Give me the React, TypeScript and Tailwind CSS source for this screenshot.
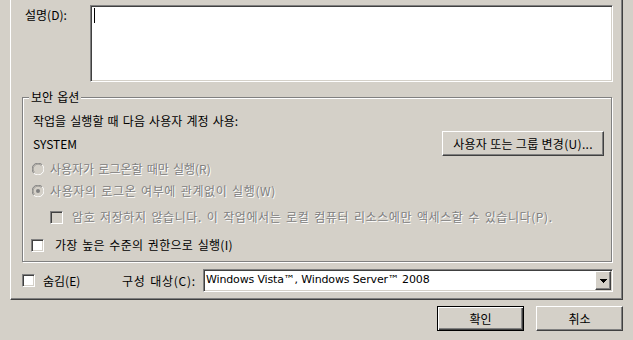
import React from 'react';

const sunken =
  'border border-t-[#808080] border-l-[#808080] border-b-white border-r-white shadow-[inset_1px_1px_0_#404040,inset_-1px_-1px_0_#d4d0c8]';
const raised =
  'border border-t-white border-l-white border-b-[#404040] border-r-[#404040] shadow-[inset_-1px_-1px_0_#808080]';
const dim = 'text-[#808080] [text-shadow:1px_1px_0_#fff]';

const CheckBox = ({ disabled }: { disabled?: boolean }) => (
  <div className={`w-[13px] h-[13px] shrink-0 ${sunken} ${disabled ? 'bg-[#d4d0c8]' : 'bg-white'}`} />
);

const Radio = ({ checked }: { checked?: boolean }) => (
  <svg width="12" height="12" viewBox="0 0 12 12" className="shrink-0">
    <circle cx="6" cy="6" r="5.5" fill="#d4d0c8" />
    <path d="M1.8 10.2 A5.5 5.5 0 0 1 10.2 1.8" fill="none" stroke="#808080" strokeWidth="1" />
    <path d="M2.6 9.4 A4.5 4.5 0 0 1 9.4 2.6" fill="none" stroke="#404040" strokeWidth="1" opacity="0.35" />
    <path d="M10.2 1.8 A5.5 5.5 0 0 1 1.8 10.2" fill="none" stroke="#ffffff" strokeWidth="1" />
    {checked && <circle cx="6" cy="6" r="2" fill="#808080" />}
  </svg>
);

const Option = ({ children, gap, indent, disabled, box, tracking = 0 }: any) => (
  <div className="h-[16px] flex items-center" style={{ paddingLeft: indent }}>
    {box}
    <span
      className={`leading-[16px] whitespace-nowrap ${disabled ? dim : 'text-black'}`}
      style={{ marginLeft: gap, letterSpacing: tracking }}
    >
      {children}
    </span>
  </div>
);

export default function App() {
  return (
    <div className="w-[633px] h-[340px] overflow-hidden bg-[#d4d0c8] text-[12px] text-black font-['Noto_Sans_CJK_KR','Noto_Sans',sans-serif] [word-spacing:1.5px] flex flex-col">
      {/* tab page */}
      <div className="ml-[10px] w-[613px] h-[300px] shrink-0 flex flex-col border-l border-l-white border-r border-r-[#404040] border-b border-b-[#404040] shadow-[inset_-1px_-1px_0_#808080]">
        <div className="flex mt-[5px] pl-[14px]">
          <span className="w-[65px] mt-[2px] leading-[16px]">설명(D):</span>
          <div className={`w-[523px] h-[77px] bg-white ${sunken}`}>
            <div className="ml-[3px] mt-[2px] w-px h-[15px] bg-black" />
          </div>
        </div>

        {/* security group */}
        <div className="relative ml-[11px] mt-[15px] w-[590px] h-[165px] border border-[#808080] shadow-[inset_1px_1px_0_#fff,1px_1px_0_#fff]">
          <span className="absolute left-[6px] -top-[9px] px-[2px] bg-[#d4d0c8] leading-[16px]">보안 옵션</span>
          <div className="flex flex-col pl-[8px] pr-[7px] pt-[15px]">
            <div className="h-[16px] leading-[16px] pl-[2px]">작업을 실행할 때 다음 사용자 계정 사용:</div>
            <div className="mt-[2px] h-[25px] flex items-center justify-between">
              <span className="pl-[2px] leading-[16px]">SYSTEM</span>
              <button className={`w-[162px] h-[25px] bg-[#d4d0c8] leading-[16px] tracking-[0.3px] ${raised}`}>
                사용자 또는 그룹 변경(U)...
              </button>
            </div>
            <div className="mt-[5px]">
              <Option indent={1} gap={6} disabled box={<Radio />}>
                사용자가 로그온할 때만 실행(R)
              </Option>
            </div>
            <div className="mt-[6px]">
              <Option indent={1} gap={6} disabled tracking={0.6} box={<Radio checked />}>
                사용자의 로그온 여부에 관계없이 실행(W)
              </Option>
            </div>
            <div className="mt-[10px]">
              <Option indent={19} gap={9} disabled tracking={0.6} box={<CheckBox disabled />}>
                암호 저장하지 않습니다. 이 작업에서는 로컬 컴퓨터 리소스에만 액세스할 수 있습니다(P).
              </Option>
            </div>
            <div className="mt-[12px]">
              <Option indent={0} gap={11} tracking={0.3} box={<CheckBox />}>
                가장 높은 수준의 권한으로 실행(I)
              </Option>
            </div>
          </div>
        </div>

        {/* bottom row */}
        <div className="mt-[7px] ml-[11px] h-[23px] flex items-center">
          <div className="w-[100px] flex items-center">
            <CheckBox />
            <span className="ml-[8px] leading-[16px]">숨김(E)</span>
          </div>
          <span className="w-[81px] leading-[16px] tracking-[0.7px]">구성 대상(C):</span>
          <div className={`w-[410px] h-[23px] bg-white flex items-center justify-between ${sunken}`}>
            <span className="pl-[2px] text-[11px] font-['DejaVu_Sans',sans-serif] [word-spacing:0px] tracking-[-0.15px] whitespace-nowrap">
              Windows Vista™, Windows Server™ 2008
            </span>
            <div className={`mr-px w-[16px] h-[19px] bg-[#d4d0c8] flex items-center justify-center ${raised}`}>
              <svg width="7" height="4" viewBox="0 0 7 4" shapeRendering="crispEdges">
                <path d="M0 0h7v1H0zM1 1h5v1H1zM2 2h3v1H2zM3 3h1v1H3z" fill="#000" />
              </svg>
            </div>
          </div>
        </div>
      </div>

      {/* dialog buttons */}
      <div className="ml-[10px] w-[613px] mt-[6px] flex justify-end gap-[12px]">
        <button className="w-[87px] h-[25px] bg-[#d4d0c8] leading-[16px] border border-black shadow-[inset_1px_1px_0_#fff,inset_-1px_-1px_0_#404040,inset_-2px_-2px_0_#808080]">
          확인
        </button>
        <button className={`w-[87px] h-[25px] bg-[#d4d0c8] leading-[16px] ${raised}`}>취소</button>
      </div>
    </div>
  );
}
